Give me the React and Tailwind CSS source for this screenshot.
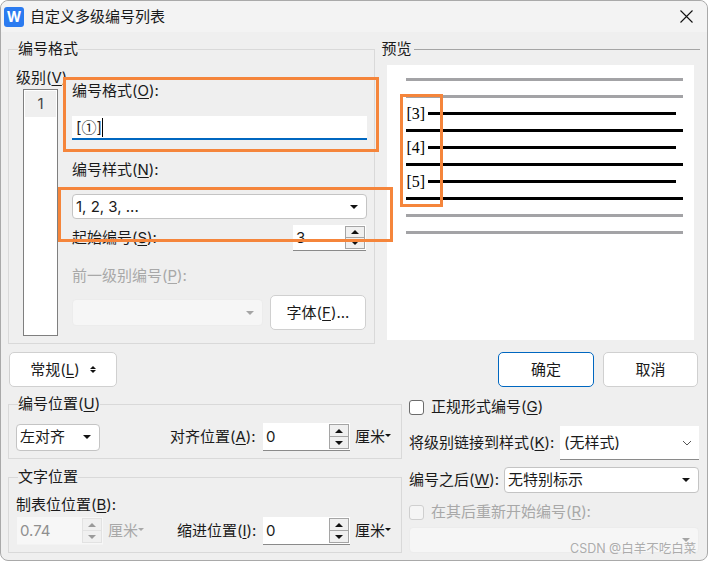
import React from 'react';

const Triangle = ({ up, color = '#111', className = '' }) => (
  <svg width="8" height="4" viewBox="0 0 8 4" className={className}>
    <path d={up ? 'M4 0L8 4H0Z' : 'M0 0H8L4 4Z'} fill={color} />
  </svg>
);

const Key = ({ children }) => <span className="underline underline-offset-2">{children}</span>;

function Select({ children, className = '', disabled }) {
  return (
    <div className={`flex items-center justify-between rounded-[4px] border pl-[3px] pr-[8px] ${disabled ? 'border-[#ececec] bg-[#f6f6f6]' : 'border-[#c4c4c4] bg-white'} ${className}`}>
      <span className="truncate">{children}</span>
      <Triangle color={disabled ? '#a5a5a5' : '#111'} />
    </div>
  );
}

function Spin({ value, className = '', disabled }) {
  return (
    <div className={`flex items-stretch border-b ${disabled ? 'border-[#f3f3f3] bg-[#f7f7f7] text-[#8f8f8f]' : 'border-[#8a8a8a] bg-white'} ${className}`}>
      <span className="flex flex-1 items-center pl-[3px]">{value}</span>
      <div className={`m-[1px] flex w-[20px] flex-col border ${disabled ? 'border-[#e2e2e2]' : 'border-[#a5a5a5]'} bg-[#f0f0f0]`}>
        <div className={`flex flex-1 items-center justify-center border-b ${disabled ? 'border-[#e2e2e2]' : 'border-[#a5a5a5]'}`}>
          <Triangle up color={disabled ? '#9a9a9a' : '#111'} />
        </div>
        <div className="flex flex-1 items-center justify-center">
          <Triangle color={disabled ? '#9a9a9a' : '#111'} />
        </div>
      </div>
    </div>
  );
}

function Unit({ disabled }) {
  return (
    <span className={`flex items-center ${disabled ? 'text-[#a8a8a8]' : ''}`}>
      厘米
      <svg width="6" height="3" viewBox="0 0 6 3" className="mb-[4px]">
        <path d="M0 0H6L3 3Z" fill={disabled ? '#a8a8a8' : '#111'} />
      </svg>
    </span>
  );
}

function Button({ children, primary, className = '' }) {
  return (
    <div className={`flex items-center justify-center rounded-[5px] border bg-white ${primary ? 'border-[#0067c0]' : 'border-[#d0d0d0]'} ${className}`}>
      {children}
    </div>
  );
}

function PreviewLine({ dark, num }) {
  if (num) {
    return (
      <div className="flex h-[3px] items-center">
        <span className="w-[22px] font-['Liberation_Serif',serif] text-[16px] text-black">[{num}]</span>
        <div className="h-[3px] w-[248px] bg-black" />
      </div>
    );
  }
  return <div className={`h-[3px] w-[277px] ${dark ? 'bg-black' : 'bg-[#a3a3a6]'}`} />;
}

const Box = ({ className }) => <div className={`absolute border-[3px] border-[#f5853b] ${className}`} />;

export default function App() {
  return (
    <div className="relative h-[562px] w-[708px] overflow-hidden bg-white font-['Inter','Noto_Sans_CJK_SC',sans-serif] text-[15px] leading-5 text-[#1a1a1a]">
      <div className="flex h-[561px] flex-col rounded-[8px] border border-[#a9a9a9] bg-[#efefef]">
        {/* title bar */}
        <div className="flex h-[31px] shrink-0 items-center rounded-t-[8px] bg-[#f3f3f3] pl-[3px] pr-[14px]">
          <div className="flex h-5 w-5 items-center justify-center rounded-[3px] bg-[#2b7bf0] text-[14px] font-bold text-white">W</div>
          <span className="ml-[6px]">自定义多级编号列表</span>
          <svg width="13" height="13" viewBox="0 0 13 13" className="ml-auto">
            <path d="M0.5 0.5L12.5 12.5M12.5 0.5L0.5 12.5" stroke="#111" strokeWidth="1.1" />
          </svg>
        </div>

        <div className="pl-[7px] pr-[7px] pt-[7px]">
          {/* top section */}
          <div className="flex gap-[5px]">
            <fieldset className="h-[305px] w-[368px] border border-[#d9d9d9]">
              <legend className="ml-[9px]">编号格式</legend>
              <div className="flex pl-[7px]">
                <div className="w-[56px] pt-[9px]">
                  <div className="whitespace-nowrap">级别(<Key>V</Key>)</div>
                  <div className="ml-[7px] mt-px h-[247px] w-[35px] border border-[#7f7f7f] bg-white p-px">
                    <div className="flex h-[26px] items-center justify-center bg-[#efefef] text-[#444]">1</div>
                  </div>
                </div>
                <div className="w-[295px] pt-[22px]">
                  <div>编号格式(<Key>O</Key>):</div>
                  <div className="mt-[15px] flex h-6 items-center border-b-2 border-[#0067c0] bg-white pl-[4px]">
                    <span>[<span className="font-['Noto_Sans_CJK_SC',sans-serif]">①</span>]</span>
                    <span className="h-[19px] w-px bg-black" />
                  </div>
                  <div className="mt-5">编号样式(<Key>N</Key>):</div>
                  <Select className="mt-[14px] h-[25px]">1, 2, 3, ...</Select>
                  <div className="mt-[6px] flex h-[26px] items-center justify-between pr-px">
                    <span>起始编号(<Key>S</Key>):</span>
                    <Spin value="3" className="h-[26px] w-[73px]" />
                  </div>
                  <div className="mt-[15px] text-[#a8a8a8]">前一级别编号(<Key>P</Key>):</div>
                  <div className="mt-[9px] flex h-[35px] items-center justify-between pr-px">
                    <Select disabled className="h-[27px] w-[191px]" />
                    <Button className="h-[35px] w-[96px]">字体(<Key>F</Key>)...</Button>
                  </div>
                </div>
              </div>
            </fieldset>

            {/* preview */}
            <div className="ml-px w-[319px]">
              <div className="flex h-5 items-center">
                <span>预览</span>
                <div className="ml-[3px] h-px flex-1 bg-[#a5a5a5]" />
              </div>
              <div className="ml-[6px] mt-[6px] flex h-[275px] w-[307px] flex-col gap-[14px] bg-white pl-[19px] pt-[13px]">
                <PreviewLine />
                <PreviewLine />
                <PreviewLine num="3" />
                <PreviewLine dark />
                <PreviewLine num="4" />
                <PreviewLine dark />
                <PreviewLine num="5" />
                <PreviewLine dark />
                <PreviewLine />
                <PreviewLine />
              </div>
            </div>
          </div>

          {/* buttons */}
          <div className="mt-2 flex h-[35px] pl-px pr-[2px]">
            <Button className="w-[108px] gap-[10px]">
              <span>常规(<Key>L</Key>)</span>
              <span className="flex flex-col gap-px">
                <Triangle up className="h-[3px] w-[6px]" />
                <Triangle className="h-[3px] w-[6px]" />
              </span>
            </Button>
            <Button primary className="ml-auto w-[96px]">确定</Button>
            <Button className="ml-[9px] w-[95px]">取消</Button>
          </div>

          {/* bottom section */}
          <div className="flex gap-[7px]">
            <div className="w-[394px]">
              <fieldset className="mt-[7px] h-[65px] border border-[#d9d9d9] pl-[7px]">
                <legend className="ml-[2px]">编号位置(<Key>U</Key>)</legend>
                <div className="mt-[9px] flex items-center">
                  <Select className="h-[27px] w-[84px]">左对齐</Select>
                  <span className="ml-[70px] w-[93px] whitespace-nowrap">对齐位置(<Key>A</Key>):</span>
                  <Spin value="0" className="h-[28px] w-[87px]" />
                  <span className="ml-[5px]"><Unit /></span>
                </div>
              </fieldset>
              <fieldset className="mt-2 h-[86px] border border-[#d9d9d9] pl-[7px]">
                <legend className="ml-[2px]">文字位置</legend>
                <div className="mt-[8px]">制表位位置(<Key>B</Key>):</div>
                <div className="mt-[2px] flex items-center">
                  <Spin disabled value="0.74" className="ml-px h-[28px] w-[86px]" />
                  <span className="ml-[5px] w-[69px]"><Unit disabled /></span>
                  <span className="w-[86px] whitespace-nowrap">缩进位置(<Key>I</Key>):</span>
                  <Spin value="0" className="h-[28px] w-[87px]" />
                  <span className="ml-[5px]"><Unit /></span>
                </div>
              </fieldset>
            </div>

            <div className="w-[290px]">
              <div className="mt-[10px] flex h-5 items-center gap-[7px]">
                <div className="h-[15px] w-[15px] rounded-[3px] border border-[#6b6b6b] bg-white" />
                <span>正规形式编号(<Key>G</Key>)</span>
              </div>
              <div className="mt-[9px] flex h-[34px] items-center">
                <span className="w-[151px] shrink-0 whitespace-nowrap">将级别链接到样式(<Key>K</Key>):</span>
                <div className="flex h-[34px] flex-1 items-center justify-between border-b border-[#8a8a8a] bg-white pl-[4px] pr-[7px]">
                  <span>(无样式)</span>
                  <svg width="10" height="6" viewBox="0 0 10 6">
                    <path d="M1 1L5 5L9 1" fill="none" stroke="#555" strokeWidth="1" />
                  </svg>
                </div>
              </div>
              <div className="mt-[7px] flex h-[26px] items-center">
                <span className="w-[95px] shrink-0 whitespace-nowrap">编号之后(<Key>W</Key>):</span>
                <Select className="h-[26px] flex-1">无特别标示</Select>
              </div>
              <div className="mt-[9px] flex h-5 items-center gap-[7px] text-[#a8a8a8]">
                <div className="h-[15px] w-[15px] rounded-[3px] border border-[#cfcfcf] bg-[#f5f5f5]" />
                <span>在其后重新开始编号(<Key>R</Key>):</span>
              </div>
              <Select disabled className="mt-[5px] h-[26px]" />
            </div>
          </div>
        </div>
      </div>

      {/* annotation boxes drawn over the dialog */}
      <Box className="left-[63px] top-[77px] h-[75px] w-[316px]" />
      <Box className="left-[58px] top-[187px] h-[55px] w-[335px]" />
      <Box className="left-[400px] top-[94px] h-[113px] w-[43px]" />

      <span className="absolute left-[570px] top-[539px] whitespace-nowrap text-[12.5px] text-[#999999]/80">CSDN @白羊不吃白菜</span>
    </div>
  );
}
